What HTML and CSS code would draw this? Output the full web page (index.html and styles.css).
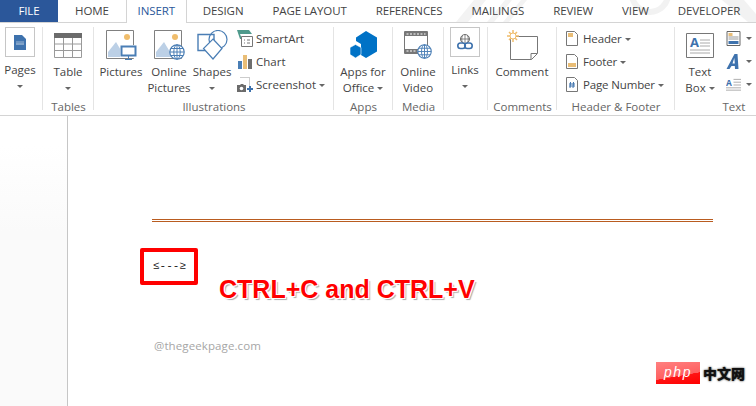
FILE: index.html
```html
<!DOCTYPE html>
<html lang="en">
<head>
<meta charset="utf-8">
<title>Word Insert ribbon</title>
<link rel="stylesheet" href="styles.css">
</head>
<body>
<div class="app">
  <svg class="defs" width="0" height="0" aria-hidden="true">
    <defs>
      <symbol id="globe" viewBox="0 0 16 16">
        <circle cx="8" cy="8" r="7.2" fill="#fff" stroke="#4a7eb5" stroke-width="1.2"/>
        <ellipse cx="8" cy="8" rx="3.2" ry="7.2" fill="none" stroke="#4a7eb5"/>
        <path d="M8 1v14M1 8h14M2 4.500h12M2 11.500h12" fill="none" stroke="#4a7eb5"/>
      </symbol>
      <symbol id="picture" viewBox="0 0 28 29">
        <path d="M.5.500h27v28H.5z" fill="#fff" stroke="#808080"/>
        <path d="M2 27V22L10 12l9 15z" fill="#bcd0e6"/>
        <circle cx="21" cy="7" r="3" fill="#f0bd6c"/>
      </symbol>
    </defs>
  </svg>

  <svg class="watermark" width="756" height="23" viewBox="0 0 756 23" aria-hidden="true">
    <path d="M474 0h12l-18 22h-12zM505 0h7l-18 22h-7zM521 0h6l-18 22h-6z" fill="#f3f3f3"/>
    <circle cx="650" cy="-6" r="18" fill="none" stroke="#f2f2f2" stroke-width="6"/>
    <path d="M722 0h22l12 14v8h-8z" fill="#f2f2f2"/>
  </svg>

  <nav class="tabs">
    <div class="tab tab-file">FILE</div>
    <div class="tab tab-home">HOME</div>
    <div class="tab tab-active">INSERT</div>
    <div class="tab">DESIGN</div>
    <div class="tab">PAGE LAYOUT</div>
    <div class="tab">REFERENCES</div>
    <div class="tab">MAILINGS</div>
    <div class="tab">REVIEW</div>
    <div class="tab">VIEW</div>
    <div class="tab">DEVELOPER</div>
  </nav>

  <section class="ribbon">
    <div class="group g-pages">
      <div class="group-body">
        <div class="big boxed w-pages">
          <div class="icon-box">
            <svg width="12" height="15" viewBox="0 0 12 15"><path d="M0 0h8l4 4v11H0z" fill="#3e72ad"/><path d="M2.500 7h7" stroke="#fff" stroke-dasharray="1 1"/><path d="M2 9h8" stroke="#fff" stroke-width=".7"/></svg>
          </div>
          <div class="label">Pages</div>
          <div class="label"><i class="caret"></i></div>
        </div>
      </div>
      <div class="group-label"></div>
    </div>

    <div class="group g-tables">
      <div class="group-body">
        <div class="big w-table">
          <div class="icon-slot">
            <svg width="28" height="25" viewBox="0 0 28 25"><path d="M0 0h28v5H0z" fill="#6b6b6b"/><path d="M.5 5v19.500h27V5M.5 11h27M.5 17.500h27M9.500 5v19M18.500 5v19" fill="none" stroke="#9a9a9a"/></svg>
          </div>
          <div class="label">Table</div>
          <div class="label"><i class="caret"></i></div>
        </div>
      </div>
      <div class="group-label">Tables</div>
    </div>

    <div class="group g-illustrations">
      <div class="group-body">
        <div class="big w-pictures">
          <div class="icon-slot">
            <svg width="31" height="30" viewBox="0 0 31 30"><use href="#picture" width="28" height="29"/><path d="M14 15h17v13H14z" fill="#fff"/><path d="M15.500 16.500h14v9h-14z" fill="#fff" stroke="#4a7eb5" stroke-width="2"/><path d="M22.500 26v3M19 29.500h7" stroke="#4a7eb5"/></svg>
          </div>
          <div class="label">Pictures</div>
        </div>
        <div class="big w-online">
          <div class="icon-slot">
            <svg width="31" height="30" viewBox="0 0 31 30"><use href="#picture" width="28" height="29"/><use href="#globe" x="15" y="14" width="16" height="16"/></svg>
          </div>
          <div class="label">Online</div>
          <div class="label">Pictures</div>
        </div>
        <div class="big w-shapes">
          <div class="icon-slot">
            <svg width="31" height="30" viewBox="0 0 31 30"><path d="M1 4.500h16v16H1z" fill="#fff" stroke="#4a7eb5" stroke-width="1.400"/><circle cx="21" cy="9.500" r="9" fill="none" stroke="#4a7eb5" stroke-width="1.200"/><path d="M16 9l9 9.500-9 10.500-9.500-10.500z" fill="#fff" stroke="#4a7eb5" stroke-width="1.200"/></svg>
          </div>
          <div class="label">Shapes</div>
          <div class="label"><i class="caret"></i></div>
        </div>
        <div class="small-col col-illus">
          <div class="small">
            <svg class="ic16" width="16" height="17" viewBox="0 0 16 17"><path d="M0 0h12l3 4H3l2 5H3z" fill="#4f9a8c"/><path d="M4.500 6.500h11v10h-11z" fill="#fff" stroke="#777"/><path d="M7 10h1M10 10h3M7 13h1M10 13h3" stroke="#777"/></svg>
            <span>SmartArt</span>
          </div>
          <div class="small">
            <svg class="ic16" width="16" height="14" viewBox="0 0 16 14"><path d="M1 6h4v8H1z" fill="#4a7eb5"/><path d="M6 0h4v14H6z" fill="#e9bd76"/><path d="M11 4h4v10h-4z" fill="#6e6e6e"/></svg>
            <span>Chart</span>
          </div>
          <div class="small">
            <svg class="ic16" width="16" height="16" viewBox="0 0 16 16"><path d="M3.500.500h9v8" fill="none" stroke="#999" stroke-dasharray="1 1"/><path d="M0 8h3l1-1h2l1 1h2v7H0z" fill="#6b6b6b"/><circle cx="4.500" cy="11.500" r="1.800" fill="#fff"/><path d="M10 12h6M13 9v6" stroke="#3e72ad" stroke-width="2"/></svg>
            <span>Screenshot</span><i class="caret caret-small"></i>
          </div>
        </div>
      </div>
      <div class="group-label">Illustrations</div>
    </div>

    <div class="group g-apps">
      <div class="group-body">
        <div class="big w-fill">
          <div class="icon-slot">
            <svg width="28" height="28" viewBox="0 0 28 28"><path d="M17 0l11 6.500v14L17 27l-5-3V13L7 10V6.500z" fill="#0072c6"/><path d="M6.500 13.500L12 16.500v7L6.500 27 1 23.500v-7z" fill="#0072c6" stroke="#fff" stroke-width=".6"/></svg>
          </div>
          <div class="label">Apps for</div>
          <div class="label">Office<i class="caret caret-small"></i></div>
        </div>
      </div>
      <div class="group-label">Apps</div>
    </div>

    <div class="group g-media">
      <div class="group-body">
        <div class="big w-fill">
          <div class="icon-slot">
            <svg width="28" height="28" viewBox="0 0 28 28"><path d="M.5.500h23v22H.5z" fill="#fff" stroke="#777"/><path d="M1 1h22v4H1zM1 18h22v4H1z" fill="#777"/><path d="M2.500 3h19M2.500 20h19" stroke="#fff" stroke-dasharray="2 1.500"/><use href="#globe" x="13" y="13" width="15" height="15"/></svg>
          </div>
          <div class="label">Online</div>
          <div class="label">Video</div>
        </div>
      </div>
      <div class="group-label">Media</div>
    </div>

    <div class="group g-links">
      <div class="group-body">
        <div class="big boxed w-fill">
          <div class="icon-box">
            <svg width="16" height="16" viewBox="0 0 16 16"><circle cx="8" cy="5" r="4.500" fill="#fff" stroke="#6b6b6b"/><path d="M3.500 5h9M8 .5v9M5.500 1.500c-1 2-1 5 0 7M10.500 1.500c1 2 1 5 0 7" fill="none" stroke="#6b6b6b" stroke-width=".8"/><rect x=".8" y="9" width="7.500" height="5.500" rx="2.700" fill="none" stroke="#3e72ad" stroke-width="1.600"/><rect x="7.700" y="9" width="7.500" height="5.500" rx="2.700" fill="none" stroke="#3e72ad" stroke-width="1.600"/></svg>
          </div>
          <div class="label">Links</div>
          <div class="label"><i class="caret"></i></div>
        </div>
      </div>
      <div class="group-label"></div>
    </div>

    <div class="group g-comments">
      <div class="group-body">
        <div class="big w-fill">
          <div class="icon-slot">
            <svg width="31" height="30" viewBox="0 0 31 30"><path d="M3.500 6.500h27v17l-6 6h-21z" fill="#fff" stroke="#777"/><path d="M30 23.500h-6v6" fill="none" stroke="#777"/><g stroke="#f0bd6c" stroke-width="1.500"><path d="M6 0v12M0 6h12M2 2l8 8M10 2l-8 8"/></g><circle cx="6" cy="6" r="3" fill="#fff" stroke="#f0bd6c"/></svg>
          </div>
          <div class="label">Comment</div>
        </div>
      </div>
      <div class="group-label">Comments</div>
    </div>

    <div class="group g-hf">
      <div class="group-body">
        <div class="small-col">
          <div class="small">
            <svg class="ic12" width="12" height="15" viewBox="0 0 12 15"><path d="M.5.500h8l3 3v11H.5z" fill="#fff" stroke="#777"/><path d="M2 2h5v4H2z" fill="#e9bd76"/></svg>
            <span>Header</span><i class="caret caret-small"></i>
          </div>
          <div class="small">
            <svg class="ic12" width="12" height="15" viewBox="0 0 12 15"><path d="M.5.500h8l3 3v11H.5z" fill="#fff" stroke="#777"/><path d="M2 9h8v4H2z" fill="#e9bd76"/></svg>
            <span>Footer</span><i class="caret caret-small"></i>
          </div>
          <div class="small">
            <svg class="ic12" width="12" height="15" viewBox="0 0 12 15"><path d="M.5.500h8l3 3v11H.5z" fill="#fff" stroke="#777"/><path d="M4.500 5L4 11M7.500 5L7 11M3 7h6M3 9h6" stroke="#3e72ad"/></svg>
            <span>Page Number</span><i class="caret caret-small"></i>
          </div>
        </div>
      </div>
      <div class="group-label">Header &amp; Footer</div>
    </div>

    <div class="group g-text">
      <div class="group-body">
        <div class="big w-textbox">
          <div class="icon-slot">
            <svg width="28" height="25" viewBox="0 0 28 25"><path d="M.5.500h27v24H.5z" fill="#fff" stroke="#777"/><path d="M14 7h10M14 10h10M14 13h10M4 17h20M4 20h20" stroke="#aaa"/><text class="glyph-a" x="4" y="14">A</text></svg>
          </div>
          <div class="label">Text</div>
          <div class="label">Box<i class="caret caret-small"></i></div>
        </div>
        <div class="small-col col-text">
          <div class="small">
            <svg class="ic-side" width="15" height="15" viewBox="0 0 14 15"><path d="M.5.500h13v14H.5z" fill="#fff" stroke="#666"/><path d="M2 2h4v3H2z" fill="#e9bd76"/><path d="M2 6h10M2 8h10" stroke="#999"/><path d="M2 10h10v3H2z" fill="#3e72ad"/></svg>
            <i class="caret"></i>
          </div>
          <div class="small">
            <svg class="ic-side" width="15" height="15" viewBox="0 0 14 15"><path d="M8 0h3l1 15H8.500l-.2-3H5L3 15H0zM7.800 4L6 9.500h2.300z" fill="#3e72ad"/></svg>
            <i class="caret"></i>
          </div>
          <div class="small">
            <svg class="ic-side" width="15" height="16" viewBox="0 0 16 16"><text class="glyph-a glyph-small" x="0" y="9.500">A</text><path d="M8 2h8M8 5h8M8 8h8M0 11h16M0 13.500h16" stroke="#aaa"/></svg>
            <i class="caret"></i>
          </div>
        </div>
      </div>
      <div class="group-label">Text</div>
    </div>
  </section>

  <main class="doc">
    <aside class="margin"></aside>
    <div class="page">
      <div class="rule"></div>
      <p class="snippet">&le;---&ge;</p>
      <p class="credit">@thegeekpage.com</p>
      <div class="callout-box"></div>
      <div class="callout-text">CTRL+C and CTRL+V</div>
      <div class="badge">
        <span class="php">php</span>
        <span class="cn">中文网</span>
      </div>
    </div>
  </main>
</div>
</body>
</html>
```

FILE: styles.css
```css
* { box-sizing: border-box; }
html, body { margin: 0; padding: 0; background: #fff; }
.app {
  position: relative;
  width: 756px;
  height: 406px;
  overflow: hidden;
  display: flex;
  flex-direction: column;
  font-family: "Open Sans", "Noto Sans", "Liberation Sans", sans-serif;
  color: #444;
}
.defs { position: absolute; }
.watermark { position: absolute; left: 0; top: 0; }

/* tabs */
.tabs {
  position: relative;
  display: flex;
  flex: none;
  height: 23px;
  border-bottom: 1px solid #d4d4d4;
  font-size: 11.500px;
  line-height: 22px;
  white-space: nowrap;
}
.tab { padding: 0 14.500px; height: 23px; letter-spacing: -.1px; }
.tab-file { width: 58px; padding: 0; text-align: center; background: #2b579a; color: #fff; height: 22px; }
.tab-home { padding-left: 17px; padding-right: 17px; }
.tab-active {
  background: #fff;
  color: #2b579a;
  border: 1px solid #d4d4d4;
  border-top: 0;
  border-bottom: 0;
  padding: 0;
  width: 61px;
  margin-right: 1.500px;
  text-align: center;
}

/* ribbon */
.ribbon {
  display: flex;
  flex: none;
  height: 93px;
  border-bottom: 1px solid #d4d4d4;
  background: #fff;
  font-size: 11.500px;
  line-height: 16px;
  white-space: nowrap;
}
.group {
  position: relative;
  flex: none;
  display: flex;
  flex-direction: column;
  height: 92px;
}
.group::after {
  content: "";
  position: absolute;
  right: 0;
  top: 4px;
  height: 83px;
  width: 1px;
  background: #e4e4e4;
}
.group-body { display: flex; height: 76px; padding-top: 4px; }
.group-label { height: 16px; text-align: center; color: #666; }

.g-pages { width: 43px; }
.g-pages .group-body { padding-left: 5px; }
.g-tables { width: 51px; }
.g-illustrations { width: 240px; }
.g-illustrations .group-body { padding-left: 5px; }
.g-apps { width: 59px; }
.g-media { width: 51px; }
.g-links { width: 44px; }
.g-links .group-body { padding-left: 6px; }
.g-comments { width: 69px; }
.g-hf { width: 118px; }
.g-hf .group-body { padding-left: 9px; letter-spacing: -.15px; }
.g-text { width: 118px; }
.g-text .group-body { padding-left: 6px; }
.g-text::after { display: none; }

.big { display: flex; flex-direction: column; align-items: center; flex: none; }
.icon-slot { height: 37px; display: flex; align-items: center; justify-content: center; padding-bottom: 1px; }
.icon-box {
  width: 30px;
  height: 30px;
  margin-bottom: 5px;
  border: 1px solid #c6c6c6;
  display: flex;
  align-items: center;
  justify-content: center;
}
.label { height: 16px; display: flex; align-items: center; }
.w-pages { width: 30px; }
.w-table { width: 50px; }
.w-pictures { width: 44px; }
.w-online { width: 52px; }
.w-shapes { width: 34px; }
.w-fill { flex: 1; }
.w-textbox { width: 38px; }
.g-comments .big, .g-apps .big, .g-media .big, .g-tables .big { margin-right: 1px; }
.g-links .big { flex: none; width: 30px; }

.small-col { display: flex; flex-direction: column; flex: none; }
.col-illus { margin-left: 8px; }
.col-text { margin-left: 7px; }
.small { display: flex; align-items: center; height: 23px; }
.ic16 { width: 16px; margin-right: 3px; flex: none; }
.ic12 { margin-right: 5px; flex: none; }
.ic-side { margin-right: 5px; flex: none; }

.caret {
  display: block;
  width: 0;
  height: 0;
  border-top: 3px solid #666;
  border-left: 3px solid transparent;
  border-right: 3px solid transparent;
}
.caret-small { margin-left: 3px; margin-top: 1px; }
.glyph-a { font: bold 13px "Open Sans", sans-serif; fill: #3e72ad; }
.glyph-small { font-size: 9px; }

/* document */
.doc { display: flex; flex: 1; min-height: 0; }
.margin {
  width: 68px;
  flex: none;
  border-right: 1px solid #c6c6c6;
  background: linear-gradient(#fff 0, #fff 10%, #fafafa 40%, #fafafa 100%);
}
.page { position: relative; flex: 1; background: #fff; }
.rule {
  width: 561px;
  height: 3px;
  margin: 103px 0 0 84px;
  border-top: 1px solid #b95c20;
  border-bottom: 1px solid #b95c20;
}
.snippet {
  margin: 38px 0 0 85px;
  font: 11px/12px "Liberation Mono", monospace;
  color: #111;
}
.credit {
  margin: 66px 0 0 86px;
  font-size: 11.500px;
  line-height: 16px;
  color: #a6a6a6;
  letter-spacing: .1px;
}
.callout-box {
  position: absolute;
  left: 72px;
  top: 132px;
  width: 58px;
  height: 37px;
  border: 4px solid #f00;
  border-radius: 2px;
}
.callout-text {
  position: absolute;
  left: 151px;
  top: 158px;
  font: bold 25px/30px "Liberation Sans", sans-serif;
  color: #f00;
  white-space: nowrap;
  text-shadow: 1px 1px 0 #fff, -1px -1px 0 #fff, 1px -1px 0 #fff, -1px 1px 0 #fff, 2px 2px 1px #aaa;
}
.badge {
  position: absolute;
  left: 588px;
  top: 246px;
  display: flex;
  align-items: center;
}
.php {
  width: 44px;
  height: 22px;
  background: linear-gradient(170deg, #ff8080 0, #ff6060 60%, #ff1414 61%, #f00 100%);
  color: #fff;
  font: italic 14px/21px "Liberation Sans", sans-serif;
  text-align: center;
  letter-spacing: 1.500px;
}
.cn {
  margin-left: 3px;
  color: #111;
  font: 900 14px/14px "Noto Sans CJK SC", sans-serif;
  text-shadow: 0 0 2px #111;
}
```
